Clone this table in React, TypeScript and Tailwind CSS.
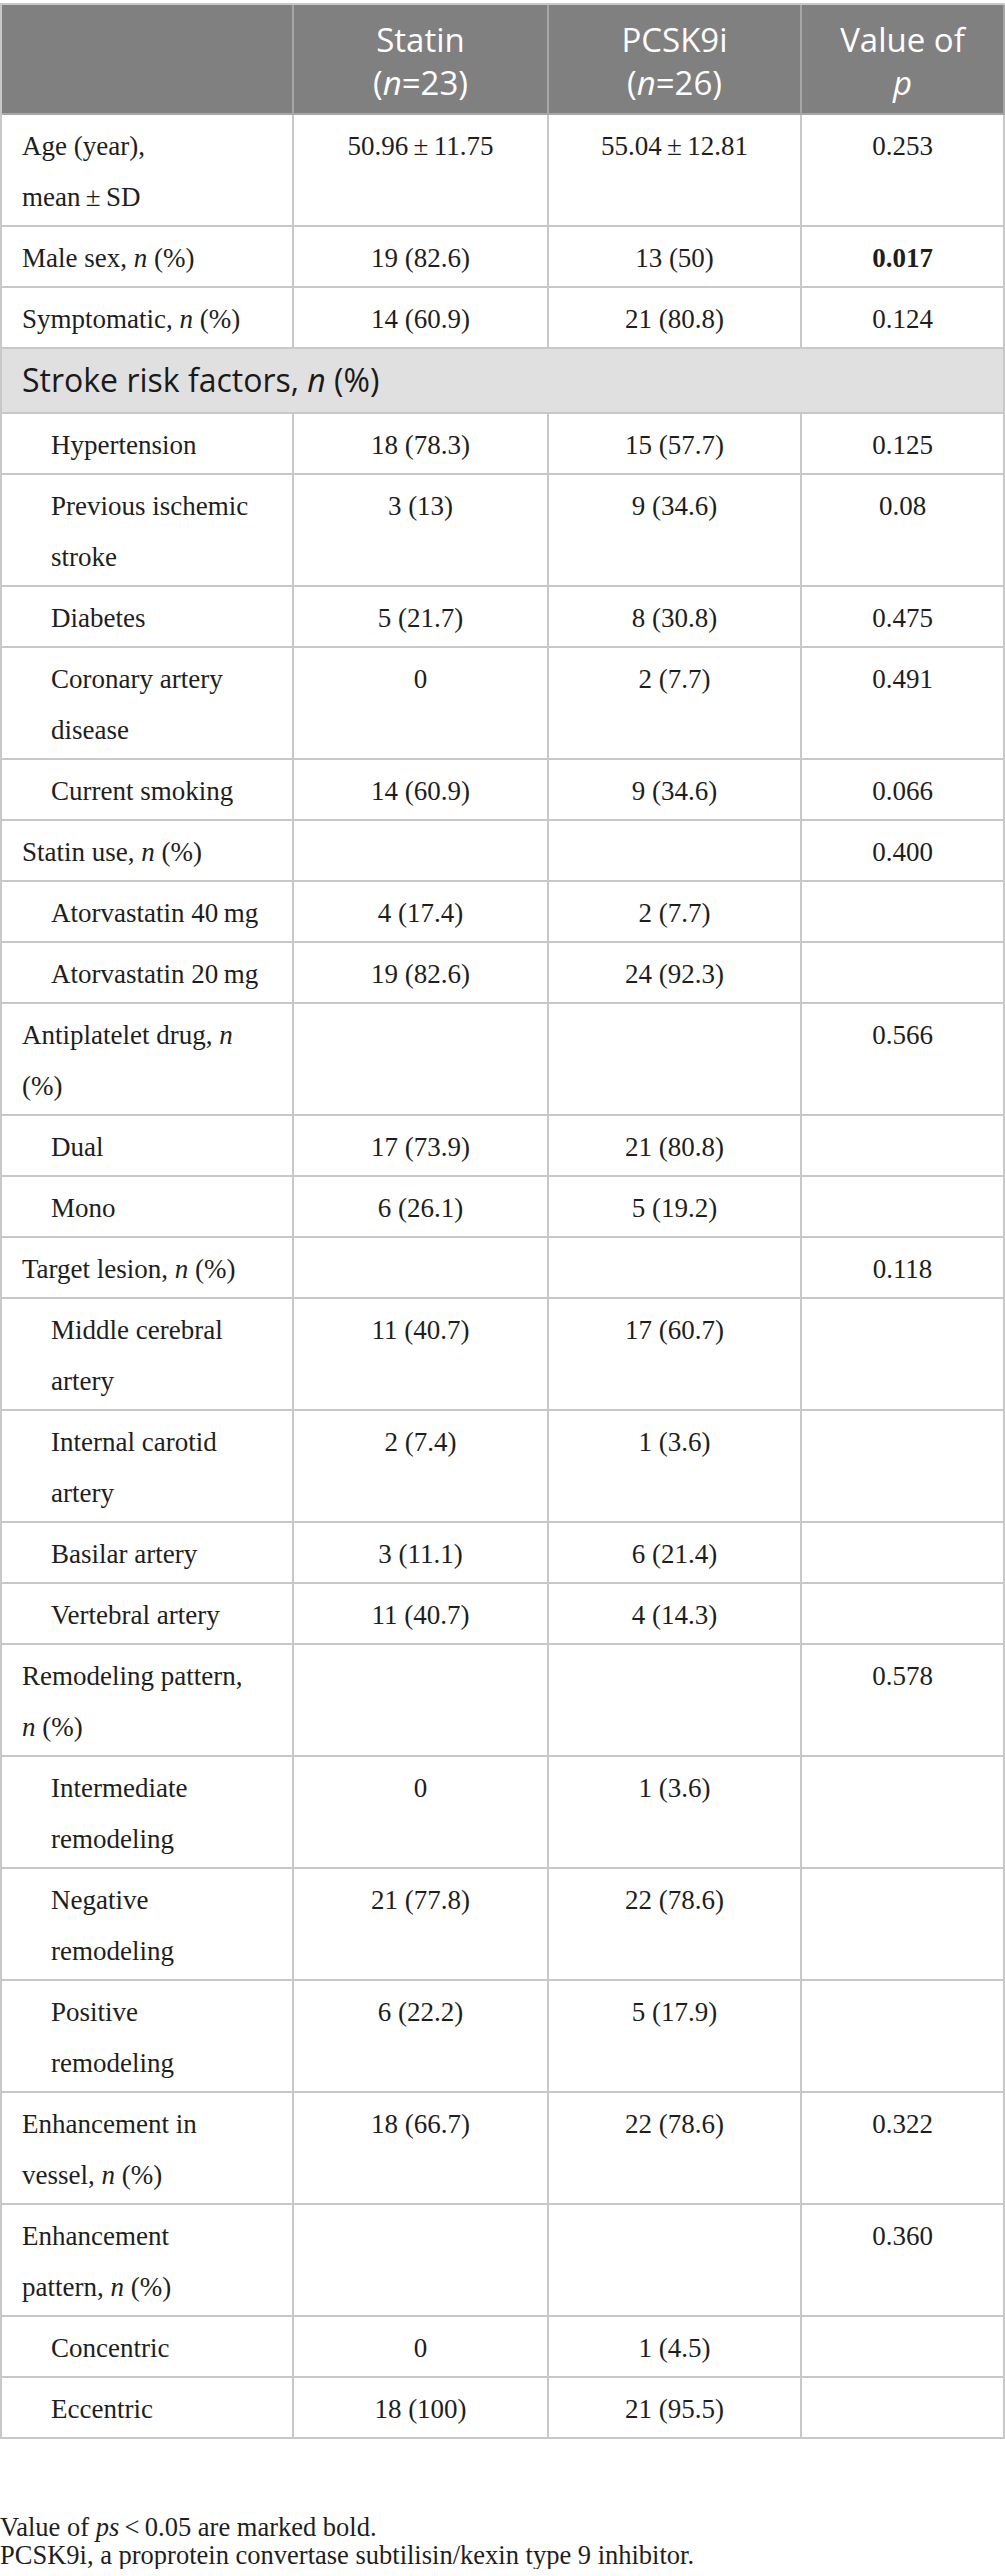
import type { ReactNode } from "react";

type DataRow = {
  lines: ReactNode[];
  a?: string;
  b?: string;
  p?: string;
  bold?: boolean;
  indent?: boolean;
};

type SectionRow = { section: ReactNode };

const N = () => <i>n</i>;

const rows: (DataRow | SectionRow)[] = [
  { lines: ["Age (year),", "mean\u2009±\u2009SD"], a: "50.96\u2009±\u200911.75", b: "55.04\u2009±\u200912.81", p: "0.253" },
  { lines: [<>Male sex, <N /> (%)</>], a: "19 (82.6)", b: "13 (50)", p: "0.017", bold: true },
  { lines: [<>Symptomatic, <N /> (%)</>], a: "14 (60.9)", b: "21 (80.8)", p: "0.124" },
  { section: <>Stroke risk factors, <N /> (%)</> },
  { lines: ["Hypertension"], a: "18 (78.3)", b: "15 (57.7)", p: "0.125", indent: true },
  { lines: ["Previous ischemic", "stroke"], a: "3 (13)", b: "9 (34.6)", p: "0.08", indent: true },
  { lines: ["Diabetes"], a: "5 (21.7)", b: "8 (30.8)", p: "0.475", indent: true },
  { lines: ["Coronary artery", "disease"], a: "0", b: "2 (7.7)", p: "0.491", indent: true },
  { lines: ["Current smoking"], a: "14 (60.9)", b: "9 (34.6)", p: "0.066", indent: true },
  { lines: [<>Statin use, <N /> (%)</>], p: "0.400" },
  { lines: ["Atorvastatin 40\u2009mg"], a: "4 (17.4)", b: "2 (7.7)", indent: true },
  { lines: ["Atorvastatin 20\u2009mg"], a: "19 (82.6)", b: "24 (92.3)", indent: true },
  { lines: [<>Antiplatelet drug, <N /></>, "(%)"], p: "0.566" },
  { lines: ["Dual"], a: "17 (73.9)", b: "21 (80.8)", indent: true },
  { lines: ["Mono"], a: "6 (26.1)", b: "5 (19.2)", indent: true },
  { lines: [<>Target lesion, <N /> (%)</>], p: "0.118" },
  { lines: ["Middle cerebral", "artery"], a: "11 (40.7)", b: "17 (60.7)", indent: true },
  { lines: ["Internal carotid", "artery"], a: "2 (7.4)", b: "1 (3.6)", indent: true },
  { lines: ["Basilar artery"], a: "3 (11.1)", b: "6 (21.4)", indent: true },
  { lines: ["Vertebral artery"], a: "11 (40.7)", b: "4 (14.3)", indent: true },
  { lines: ["Remodeling pattern,", <><N /> (%)</>], p: "0.578" },
  { lines: ["Intermediate", "remodeling"], a: "0", b: "1 (3.6)", indent: true },
  { lines: ["Negative", "remodeling"], a: "21 (77.8)", b: "22 (78.6)", indent: true },
  { lines: ["Positive", "remodeling"], a: "6 (22.2)", b: "5 (17.9)", indent: true },
  { lines: ["Enhancement in", <>vessel, <N /> (%)</>], a: "18 (66.7)", b: "22 (78.6)", p: "0.322" },
  { lines: ["Enhancement", <>pattern, <N /> (%)</>], p: "0.360" },
  { lines: ["Concentric"], a: "0", b: "1 (4.5)", indent: true },
  { lines: ["Eccentric"], a: "18 (100)", b: "21 (95.5)", indent: true },
];

const cell = "border-r-2 border-b-2 border-[#c8c8c8] align-top pt-[6px] pb-[2px] leading-[51px]";

const App = () => {
  return (
    <div className="w-[1005px] bg-white text-[#1e1e1e] font-['Liberation_Serif',serif] text-[27px]">
      <table className="mt-[3px] w-[1005px] table-fixed border-separate border-spacing-0 border-t-2 border-l-2 border-[#c8c8c8]">
        <colgroup>
          <col className="w-[292px]" />
          <col className="w-[255px]" />
          <col className="w-[253px]" />
          <col className="w-[203px]" />
        </colgroup>
        <thead>
          <tr className="bg-[#808080] text-white font-['Open_Sans',sans-serif] text-[33px] leading-[43px]">
            <th className="border-r-2 border-b-2 border-[#a6a6a6] pt-[13px] pb-[9px]"></th>
            <th className="border-r-2 border-b-2 border-[#a6a6a6] pt-[13px] pb-[9px] font-normal text-center">
              <div>Statin</div>
              <div>(<i>n</i>=23)</div>
            </th>
            <th className="border-r-2 border-b-2 border-[#a6a6a6] pt-[13px] pb-[9px] font-normal text-center">
              <div>PCSK9i</div>
              <div>(<i>n</i>=26)</div>
            </th>
            <th className="border-r-2 border-b-2 border-[#a6a6a6] pt-[13px] pb-[9px] font-normal text-center">
              <div>Value of</div>
              <div><i>p</i></div>
            </th>
          </tr>
        </thead>
        <tbody>
          {rows.map((r, i) =>
            "section" in r ? (
              <tr key={i} className="bg-[#e0e0e0]">
                <td colSpan={4} className="border-r-2 border-b-2 border-[#c8c8c8] pl-[20px] pt-[11px] pb-[12px] leading-[40px] font-['Open_Sans',sans-serif] text-[32px] text-[#1a1a1a]">
                  {r.section}
                </td>
              </tr>
            ) : (
              <tr key={i}>
                <td className={`${cell} ${r.indent ? "pl-[49px]" : "pl-[20px]"}`}>
                  {r.lines.map((l, j) => (
                    <div key={j} className="whitespace-nowrap">{l}</div>
                  ))}
                </td>
                <td className={`${cell} text-center`}>{r.a}</td>
                <td className={`${cell} text-center`}>{r.b}</td>
                <td className={`${cell} text-center ${r.bold ? "font-bold" : ""}`}>{r.p}</td>
              </tr>
            )
          )}
        </tbody>
      </table>
      <div className="mt-[74px] text-[26.5px] leading-[28px]">
        <div>
          Value of <i>ps</i>{"\u2009<\u2009"}0.05 are marked bold.
        </div>
        <div>PCSK9i, a proprotein convertase subtilisin/kexin type 9 inhibitor.</div>
      </div>
    </div>
  );
};

export default App;
